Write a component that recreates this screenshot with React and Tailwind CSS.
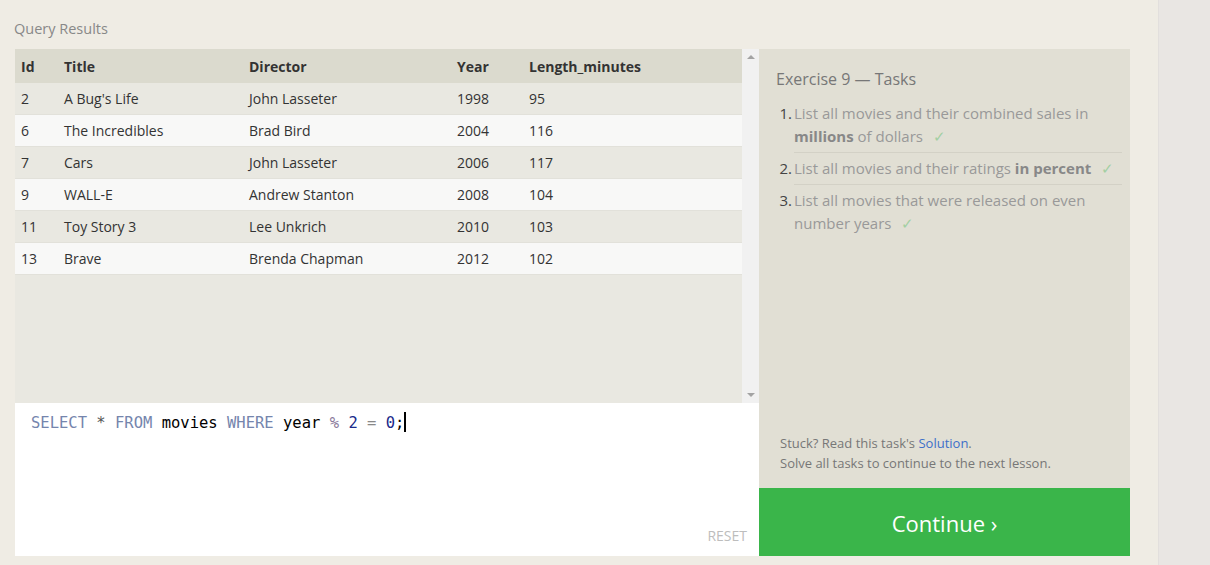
import React from 'react';

const rows = [
  [2, "A Bug's Life", 'John Lasseter', 1998, 95],
  [6, 'The Incredibles', 'Brad Bird', 2004, 116],
  [7, 'Cars', 'John Lasseter', 2006, 117],
  [9, 'WALL-E', 'Andrew Stanton', 2008, 104],
  [11, 'Toy Story 3', 'Lee Unkrich', 2010, 103],
  [13, 'Brave', 'Brenda Chapman', 2012, 102],
];

function Check() {
  return <span className="ml-[10px] text-[#a3cfa3]">✓</span>;
}

function ResultsTable() {
  return (
    <div className="flex h-[354px] bg-[#e9e8e1]">
      <div className="flex-1">
        <div className="grid grid-cols-[43px_185px_208px_72px_1fr] h-[34px] items-center bg-[#dbdace] pl-[6px] font-bold text-[#333]">
          <div>Id</div>
          <div>Title</div>
          <div>Director</div>
          <div>Year</div>
          <div>Length_minutes</div>
        </div>
        {rows.map((r, i) => (
          <div
            key={r[0]}
            className={
              'grid grid-cols-[43px_185px_208px_72px_1fr] h-[32px] items-center pl-[6px] text-[#333] border-b border-[#e2e1da] ' +
              (i % 2 === 0 ? 'bg-[#e9e8e1]' : 'bg-[#f8f8f7]')
            }
          >
            {r.map((c, j) => (
              <div key={j}>{c}</div>
            ))}
          </div>
        ))}
      </div>
      {/* scrollbar */}
      <div className="w-[17px] bg-[#f1f1f1] flex flex-col justify-between items-center py-[6px]">
        <div className="w-0 h-0 border-x-[4px] border-x-transparent border-b-[4px] border-b-[#a3a3a3]" />
        <div className="w-0 h-0 border-x-[4px] border-x-transparent border-t-[4px] border-t-[#a3a3a3]" />
      </div>
    </div>
  );
}

function Editor() {
  return (
    <div className="relative h-[153px] bg-white">
      <div className="pt-[8px] pl-[16px] text-[15.5px] leading-[24px] font-['DejaVu_Sans_Mono',monospace] text-black">
        <span className="text-[#7585ad]">SELECT</span>
        <span className="text-[#555]"> * </span>
        <span className="text-[#7585ad]">FROM</span> movies{' '}
        <span className="text-[#7585ad]">WHERE</span> year{' '}
        <span className="text-[#8a7a9a]">%</span>{' '}
        <span className="text-[#1a2a8a]">2</span>{' '}
        <span className="text-[#888]">=</span>{' '}
        <span className="text-[#1a2a8a]">0</span>;
        <span className="inline-block w-[2px] h-[20px] bg-black align-[-4px]" />
      </div>
      <div className="absolute right-[12px] bottom-[10px] text-[14px] text-[#bdbdbd]">RESET</div>
    </div>
  );
}

function Tasks() {
  return (
    <div className="w-[371px] flex flex-col">
      <div className="flex-1 bg-[#e1dfd4] pl-[17px] pr-[8px] pt-[19px] flex flex-col">
        <div className="text-[16px] text-[#777] leading-[22px]">Exercise 9 — Tasks</div>
        <ol className="mt-[12px] text-[15px] leading-[23px] text-[#999]">
          <li className="flex pb-[4px]">
            <span className="w-[18px] text-[#444] text-right pr-[2px] shrink-0">1.</span>
            <div className="flex-1 border-b border-[#d3d1c6] pb-[4px]">
              List all movies and their combined sales in <b className="text-[#888]">millions</b> of dollars
              <Check />
            </div>
          </li>
          <li className="flex pb-[4px]">
            <span className="w-[18px] text-[#444] text-right pr-[2px] shrink-0">2.</span>
            <div className="flex-1 border-b border-[#d3d1c6] pb-[4px]">
              List all movies and their ratings <b className="text-[#888]">in percent</b>
              <Check />
            </div>
          </li>
          <li className="flex">
            <span className="w-[18px] text-[#444] text-right pr-[2px] shrink-0">3.</span>
            <div className="flex-1">
              List all movies that were released on even number years
              <Check />
            </div>
          </li>
        </ol>
        <div className="mt-auto pb-[15px] pl-[4px] text-[13px] leading-[20px] text-[#777]">
          <div>
            Stuck? Read this task's <span className="text-[#3d6fc9]">Solution</span>.
          </div>
          <div>Solve all tasks to continue to the next lesson.</div>
        </div>
      </div>
      <div className="h-[68px] bg-[#3ab54a] flex items-center justify-center pt-[3px] text-white text-[22px]">
        Continue ›
      </div>
    </div>
  );
}

export default function App() {
  return (
    <div className="flex w-[1210px] h-[565px] overflow-hidden font-['Open_Sans',sans-serif] text-[14px]">
      <div className="w-[1158px] bg-[#efece4] pl-[15px] pr-[28px]">
        <div className="h-[49px] pt-[18px] text-[14.5px] text-[#888] -ml-[1px]">Query Results</div>
        <div className="flex">
          <div className="w-[744px] flex flex-col">
            <ResultsTable />
            <Editor />
          </div>
          <Tasks />
        </div>
      </div>
      <div className="flex-1 bg-[#e9e6e3] border-l border-[#e2dfdd]" />
    </div>
  );
}
